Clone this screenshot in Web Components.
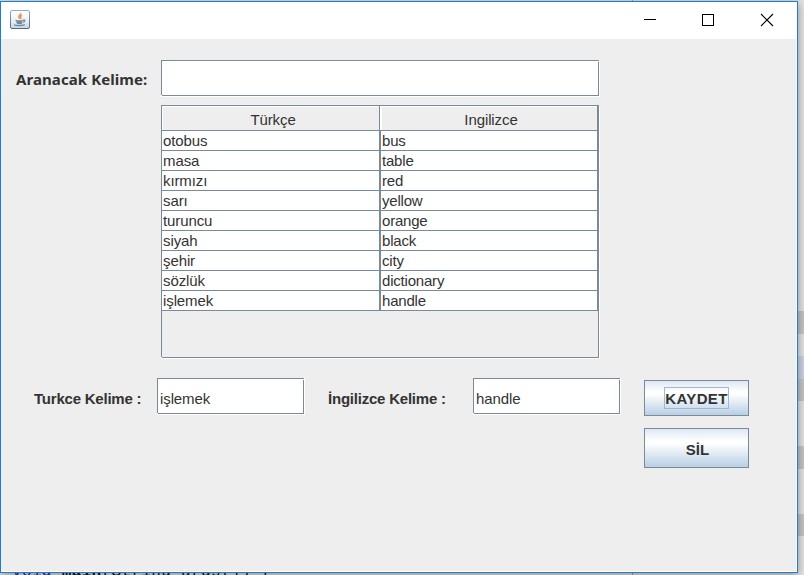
<!DOCTYPE html>
<html lang="tr"><head><meta charset="utf-8"><title>Sözlük</title>
<style>html,body{margin:0;width:804px;height:575px;overflow:hidden;background:#ddd}</style></head>
<body><dictionary-desktop></dictionary-desktop>
<script>
const define=(name,html,setup)=>customElements.define(name,class extends HTMLElement{
  connectedCallback(){
    if(this.shadowRoot)return;
    const root=this.attachShadow({mode:'open'});
    const t=document.createElement('template');t.innerHTML=html;
    root.append(t.content.cloneNode(true));
    if(setup)setup(this,root);
  }
});

define('title-bar',`<style>
:host{display:flex;height:37px;background:#fff;align-items:flex-start}
.logo{margin:8px 0 0 9px;flex:none}.controls{margin-left:auto;display:block}
</style>
<svg class="logo" width="20" height="19" viewBox="0 0 20 19">
<defs><linearGradient id="g" x1="0" y1="0" x2="0" y2="1"><stop offset="0" stop-color="#fff"/><stop offset=".55" stop-color="#eef1f4"/><stop offset="1" stop-color="#c9d3dc"/></linearGradient>
<linearGradient id="b" x1="0" y1="0" x2="0" y2="1"><stop offset="0" stop-color="#94aec2"/><stop offset="1" stop-color="#4d6c88"/></linearGradient></defs>
<rect x=".5" y=".5" width="19" height="18" rx="1.5" fill="url(#g)" stroke="url(#b)"/>
<path d="M10.8 3c.5 1.700-2.700 2.300-2 4 .3.800 1 1.200 1 1.900M12 5.300c-1.800.8-2 1.500-1.200 2.400.3.400.1.900-.3 1.300" fill="none" stroke="#ee954d" stroke-width="1.500"/>
<path d="M5.500 10.300c1.500.6 6 .6 8 0M6.200 11.900c1.600.5 4.500.5 6.100 0M7 13.300c1.400.4 3.500.4 5 0M13.300 10c2.300-.5 2 1.800-.3 2.400M4 14.900c2 1 8 1 10.800-.3" fill="none" stroke="#6f8ba3" stroke-width="1.300"/>
</svg>
<svg class="controls" width="165" height="37" viewBox="0 0 165 37">
<path d="M12 17.500h12" stroke="#000"/><rect x="70.500" y="12.500" width="11" height="11" fill="none" stroke="#000"/>
<path d="M129 12l12 12M141 12l-12 12" stroke="#000" stroke-width="1.100" fill="none"/></svg>`);

define('text-label',`<style>:host{display:block;flex:none;font-weight:bold;white-space:nowrap;color:#333}</style><slot></slot>`);

define('text-field',`<style>
:host{display:flex;flex:none;position:relative;box-sizing:border-box;height:37px;background:#fff;border-right:1px solid #fff;border-bottom:1px solid #fff}
div{flex:1;box-sizing:border-box;border:1px solid #7a8a99;padding:4px 2px 0 2px;height:36px;line-height:32px;white-space:nowrap;letter-spacing:-.1px}
:host::before,:host::after{content:"";position:absolute;width:1px;height:1px;background:#fff}
:host::before{left:0;top:35px}:host::after{right:0;top:1px}
</style><div><slot></slot></div>`);

define('push-button',`<style>
:host{display:flex;box-sizing:border-box;width:105px;border:1px solid #7a8a99;align-items:center;justify-content:center;font-weight:bold;
background:linear-gradient(#dde8f3 0%,#fff 32%,#fff 38%,#b8cfe5 100%)}
span{display:block;box-sizing:border-box;height:22px;line-height:25px;padding-left:2px;text-align:center;white-space:nowrap}
:host([focused]) span{width:65px;border:1px solid #a3b8cc;line-height:21px;padding-left:0;letter-spacing:.35px}
</style><span><slot></slot></span>`);

define('word-table',`<style>
:host{display:block;position:relative;box-sizing:border-box;width:438px;height:253px;border:1px solid #7a8a99;box-shadow:1px 1px #fff;flex:none;letter-spacing:-.1px}
:host::before{content:"";position:absolute;left:-1px;bottom:-1px;width:1px;height:1px;background:#fff}
.head,.row{display:grid;grid-template-columns:218px 218px}
.head span{box-sizing:border-box;height:25px;border-right:1px solid #7a8a99;border-bottom:1px solid #7a8a99;box-shadow:inset 1px 1px #fff;text-align:center;line-height:27px;padding-left:5px}
.row span{box-sizing:border-box;height:20px;background:#fff;border-right:1px solid #7a8a99;border-bottom:1px solid #7a8a99;line-height:19px;padding-left:1px;white-space:nowrap}
.head span+span{box-shadow:inset 2px 1px #fff}
.row span+span{border-left:1px solid #7a8a99;padding-left:1px;letter-spacing:-.2px}
</style><div class="head"><span>Türkçe</span><span>Ingilizce</span></div>`,(host,root)=>{
  const words=[['otobus','bus'],['masa','table'],['kırmızı','red'],['sarı','yellow'],['turuncu','orange'],['siyah','black'],['şehir','city'],['sözlük','dictionary'],['işlemek','handle']];
  for(const pair of words){const row=document.createElement('div');row.className='row';
    for(const word of pair){const cell=document.createElement('span');cell.textContent=word;row.append(cell)}
    root.append(row)}
});

define('app-window',`<style>
:host{display:block;box-sizing:border-box;width:798px;height:572px;border:1px solid #1a80d2;background:#fff;box-shadow:0 2px 9px rgba(0,0,0,.4)}
main{box-sizing:border-box;width:795px;height:532px;background:#eee;padding-top:21px}
.search{display:flex;padding-left:15px;height:37px}
.search text-label{width:145px;font:bold 15px/39px "Noto Sans","Open Sans",sans-serif;letter-spacing:.08px}
.search text-field{width:439px}
word-table{margin:8px 0 0 160px}
.form{display:flex;margin-top:20px;padding-left:33px;align-items:flex-start}
.form text-label{line-height:42px;letter-spacing:-.22px}.form text-field{width:148px}
.one{width:123px}.two{width:145px;margin-left:23px}
.buttons{display:grid;grid-template-rows:36px 40px;gap:12px;margin:2px 0 0 23px}
</style><title-bar></title-bar>
<main><div class="search"><text-label>Aranacak Kelime:</text-label><text-field></text-field></div>
<word-table></word-table>
<div class="form"><text-label class="one">Turkce Kelime :</text-label><text-field>işlemek</text-field>
<text-label class="two">İngilizce Kelime :</text-label><text-field>handle</text-field>
<div class="buttons"><push-button focused>KAYDET</push-button><push-button>SİL</push-button></div></div></main>`);

define('dictionary-desktop',`<style>
:host{display:block;position:relative;width:804px;height:575px;overflow:hidden;background:#e4e4e4;font:15px/18px "Liberation Sans",Arial,sans-serif;color:#333}
.behind{position:absolute;inset:0;background:linear-gradient(transparent 311px,#c6c6c6 311px 334px,transparent 334px 356px,#ccd3e3 356px 379px,#c6c6c6 379px 401px,transparent 401px 446px,#c6c6c6 446px 469px,transparent 469px 514px,#c6c6c6 514px 536px,transparent 536px)}
.margin{position:absolute;left:632px;top:0;width:1px;height:575px;background:#e88}
.code{position:absolute;left:12px;top:563px;font:16px/18px "Liberation Mono",monospace;letter-spacing:.35px;color:#111;white-space:pre}
.code i{font-style:normal;color:#22c}
app-window{position:absolute;left:0;top:1px}
</style><div class="behind"></div><div class="margin"></div><div class="code"><i>void</i> <b>main</b>(String args[]) {</div><app-window></app-window>`);
</script></body></html>
